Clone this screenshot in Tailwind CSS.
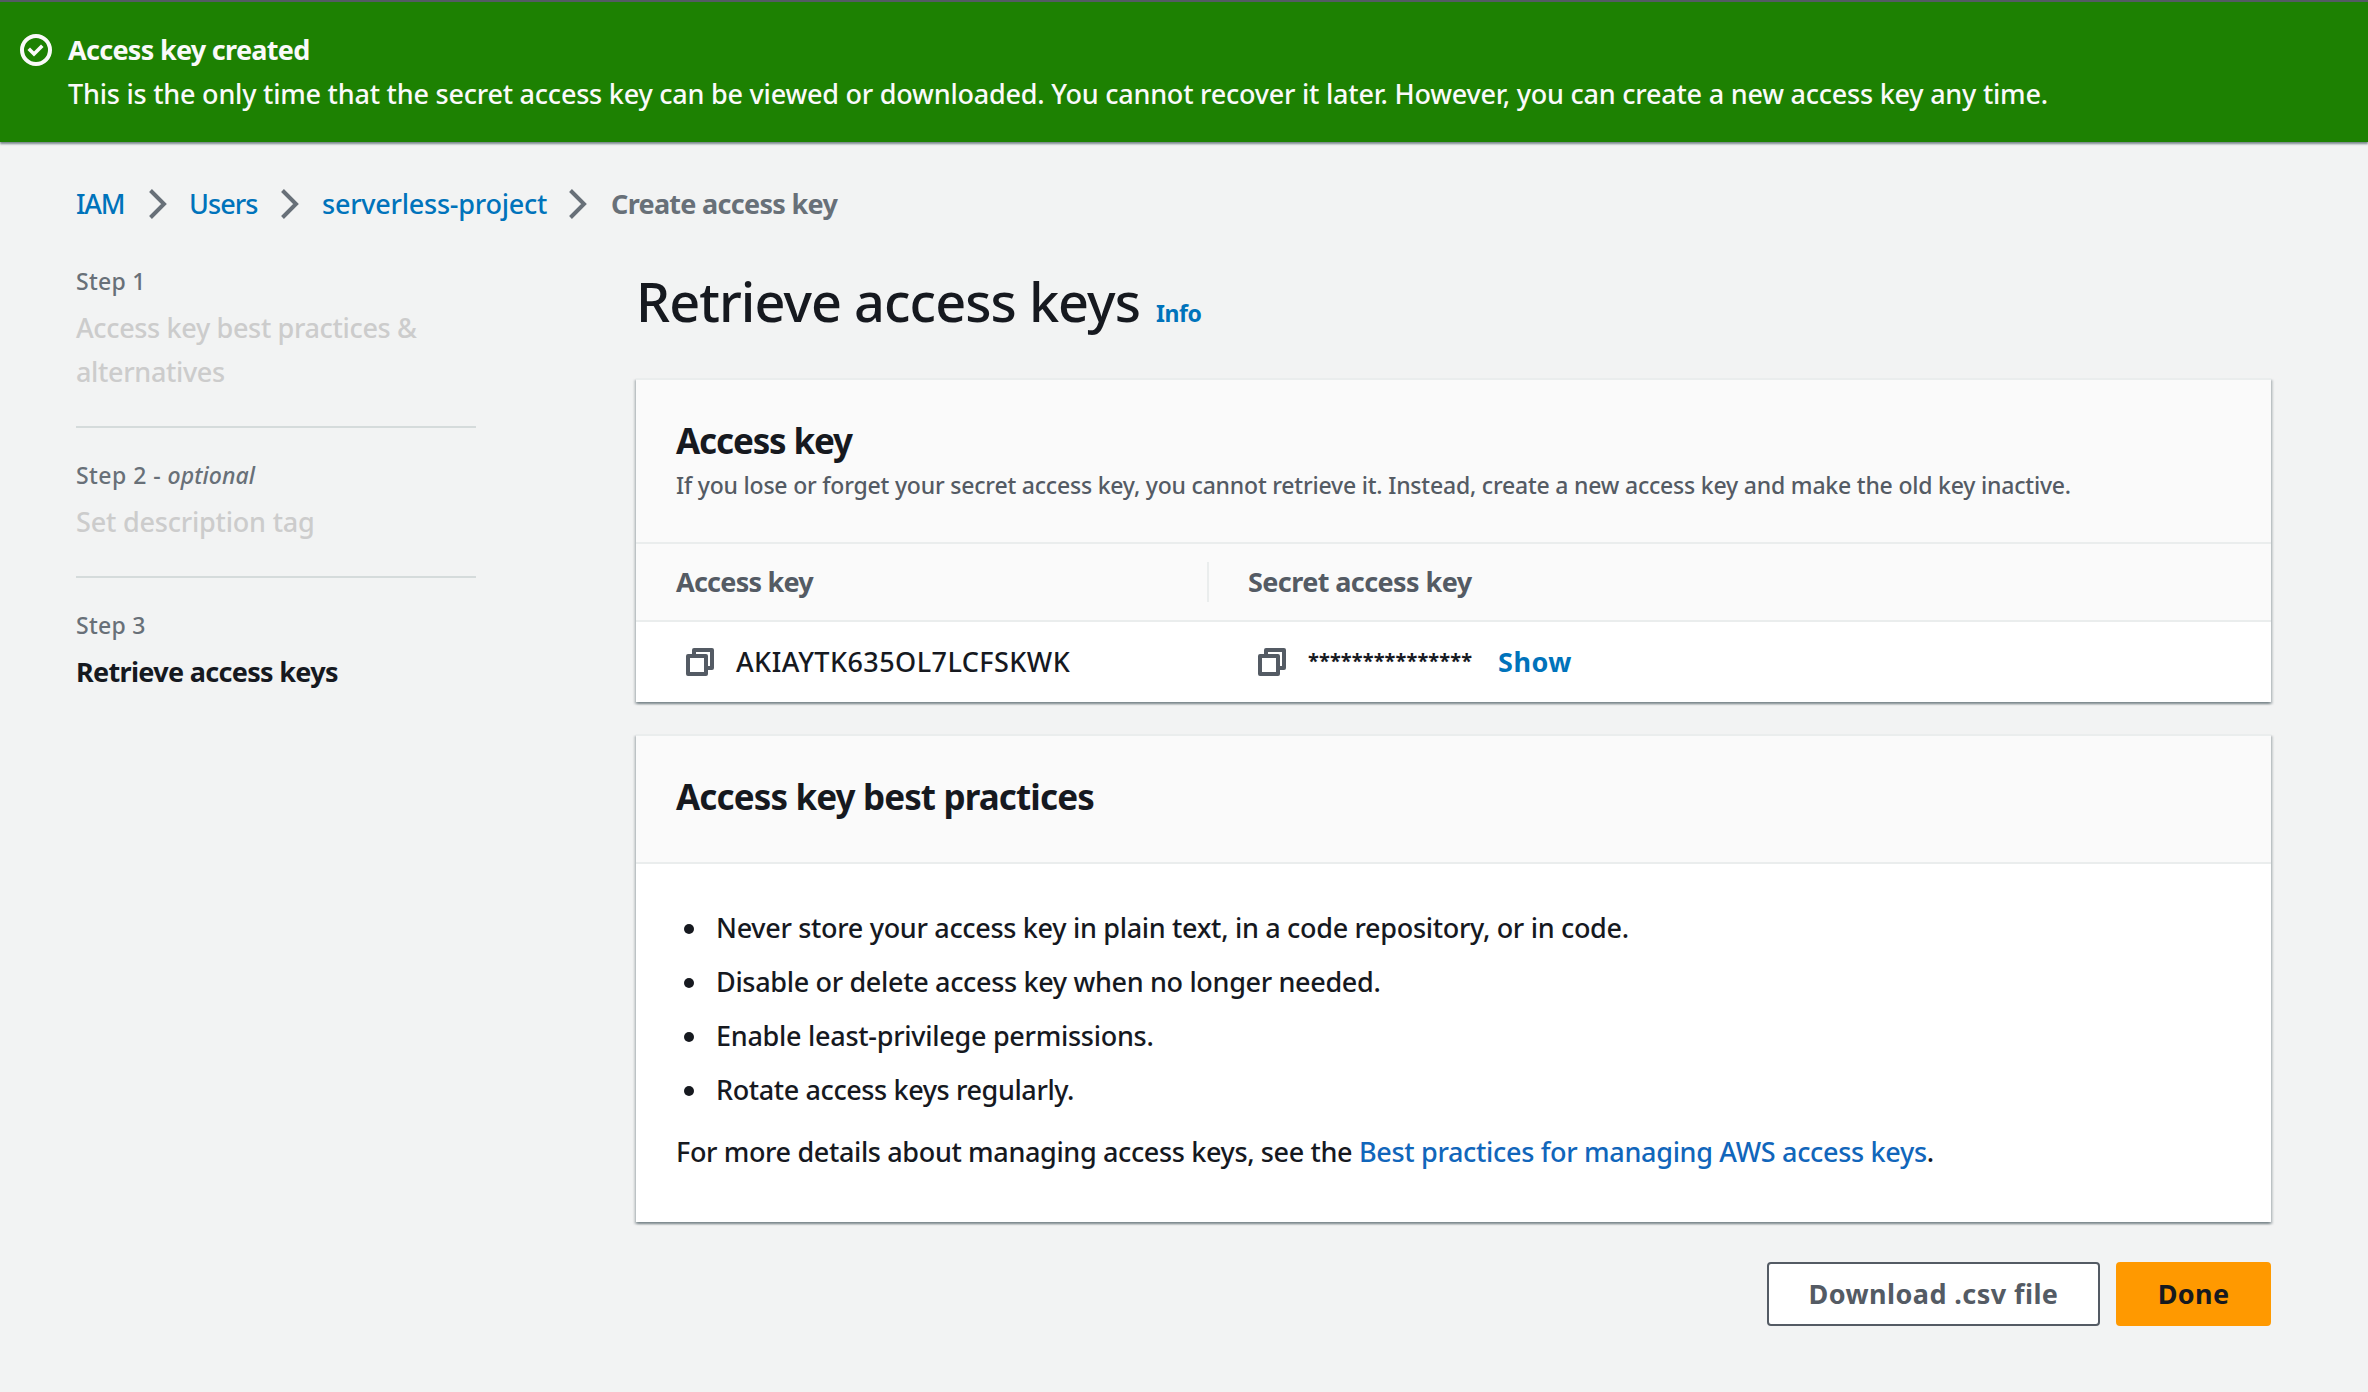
<!DOCTYPE html>
<html lang="en">
<head>
<meta charset="utf-8">
<title>Create access key | IAM</title>
<script src="https://cdn.jsdelivr.net/npm/@tailwindcss/browser@4"></script>
</head>
<body class="min-h-screen overflow-hidden bg-[#f2f3f3] font-['Noto_Sans',sans-serif] text-[27px] leading-[44px] font-medium text-[#16191f]">

<!-- Success flash -->
<div class="flex h-[142px] items-start border-t-2 border-[#545b64] bg-[#1d8102] pt-[26px] pl-5 text-[#fafafa] shadow-[0_2px_2px_0_rgba(0,28,36,0.5)]">
  <svg class="mt-[6px] size-8 shrink-0" viewBox="0 0 16 16" fill="none" stroke="currentColor" stroke-width="2"><circle cx="8" cy="8" r="7"/><path d="m5 8 2 2 3.5-3.5" stroke-linecap="square" stroke-width="1.8"/></svg>
  <div class="ml-4 whitespace-nowrap">
    <p class="font-bold tracking-[-0.7px]">Access key created</p>
    <p class="tracking-[-0.22px]">This is the only time that the secret access key can be viewed or downloaded. You cannot recover it later. However, you can create a new access key any time.</p>
  </div>
</div>

<!-- Breadcrumbs -->
<nav class="mt-10 flex items-start pl-[76px] whitespace-nowrap text-[#0073bb]">
  <a class="w-[73px] tracking-[-1.3px]">IAM</a>
  <svg class="mt-[7px] h-[30px] w-[18px] text-[#687078]" viewBox="0 0 18 30" fill="none" stroke="currentColor" stroke-width="4"><path d="M1.5 1.5 15 15 1.5 28.5"/></svg>
  <a class="ml-[22px] w-[92px] tracking-[-0.9px]">Users</a>
  <svg class="mt-[7px] h-[30px] w-[18px] text-[#687078]" viewBox="0 0 18 30" fill="none" stroke="currentColor" stroke-width="4"><path d="M1.5 1.5 15 15 1.5 28.5"/></svg>
  <a class="ml-[23px] w-[247px] tracking-[-0.24px]">serverless-project</a>
  <svg class="mt-[7px] h-[30px] w-[18px] text-[#687078]" viewBox="0 0 18 30" fill="none" stroke="currentColor" stroke-width="4"><path d="M1.5 1.5 15 15 1.5 28.5"/></svg>
  <span class="ml-[24px] font-bold tracking-[-0.7px] text-[#687078]">Create access key</span>
</nav>

<div class="flex items-start gap-40 pt-[37px] pl-[76px]">
  <!-- Wizard steps -->
  <ol class="w-[400px] shrink-0">
    <li class="border-b-2 border-[#d5dbdb] pb-8">
      <p class="text-[23px] leading-9 tracking-[0.25px] text-[#687078]">Step 1</p>
      <p class="mt-[7px] tracking-[-0.34px] text-[#cccccc]">Access key best practices &amp;<br>alternatives</p>
    </li>
    <li class="border-b-2 border-[#d5dbdb] pt-[29px] pb-8">
      <p class="text-[23px] leading-9 tracking-[0.45px] text-[#687078]">Step 2 - <i class="tracking-[0.1px]">optional</i></p>
      <p class="mt-[7px] tracking-[-0.2px] text-[#cccccc]">Set description tag</p>
    </li>
    <li class="pt-[29px]">
      <p class="text-[23px] leading-9 tracking-[0.25px] text-[#687078]">Step 3</p>
      <p class="mt-[7px] font-bold tracking-[-0.68px]">Retrieve access keys</p>
    </li>
  </ol>

  <main class="w-[1635px] shrink-0">
    <div class="flex items-baseline pt-px">
      <h1 class="w-[520px] text-[54px] leading-[74px] font-medium tracking-[-0.95px] whitespace-nowrap">Retrieve access keys</h1>
      <a class="text-[23px] leading-9 font-bold tracking-[-0.4px] text-[#0073bb]">Info</a>
    </div>

    <!-- Key table -->
    <section class="mt-10 border-t-2 border-[#eaeded] bg-white shadow-[0_2px_2px_0_rgba(0,28,36,0.3),2px_2px_2px_0_rgba(0,28,36,0.15),-2px_2px_2px_0_rgba(0,28,36,0.15)]">
      <header class="border-b-2 border-[#eaeded] bg-[#fafafa] px-10 pt-[37px] pb-[39px]">
        <h2 class="text-[35px] leading-[47px] font-bold tracking-[-1.15px]">Access key</h2>
        <p class="mt-[3px] text-[23px] leading-9 tracking-[-0.2px] whitespace-nowrap text-[#545b64]">If you lose or forget your secret access key, you cannot retrieve it. Instead, create a new access key and make the old key inactive.</p>
      </header>
      <div class="grid grid-cols-[573px_1fr] border-b-2 border-[#eaeded] bg-[#fafafa] font-bold text-[#545b64]">
        <div class="flex items-center justify-between py-4 pl-10 tracking-[-0.75px]">Access key<span class="h-10 w-[2px] bg-[#eaeded]"></span></div>
        <div class="py-4 pl-[39px] tracking-[-0.58px]">Secret access key</div>
      </div>
      <div class="grid grid-cols-[573px_1fr] py-[18px]">
        <div class="flex items-start pl-[50px]">
          <svg class="mt-2 size-7 text-[#545b64]" viewBox="0 0 28 28" fill="none" stroke="currentColor" stroke-width="4" stroke-linejoin="round"><path d="M8 6V2h18v18h-6"/><path d="M2 8h18v18H2z"/></svg>
          <span class="ml-[22px] tracking-[0.44px]">AKIAYTK635OL7LCFSKWK</span>
        </div>
        <div class="flex items-start pl-[49px]">
          <svg class="mt-2 size-7 text-[#545b64]" viewBox="0 0 28 28" fill="none" stroke="currentColor" stroke-width="4" stroke-linejoin="round"><path d="M8 6V2h18v18h-6"/><path d="M2 8h18v18H2z"/></svg>
          <span class="mt-[7px] ml-[22px] w-[190px] text-[20px] leading-[27px] font-bold tracking-[0.1px]">***************</span>
          <a class="font-bold tracking-[0.5px] text-[#0073bb]">Show</a>
        </div>
      </div>
    </section>

    <!-- Best practices -->
    <section class="mt-8 border-t-2 border-[#eaeded] bg-white shadow-[0_2px_2px_0_rgba(0,28,36,0.3),2px_2px_2px_0_rgba(0,28,36,0.15),-2px_2px_2px_0_rgba(0,28,36,0.15)]">
      <header class="border-b-2 border-[#eaeded] bg-[#fafafa] px-10 pt-[37px] pb-[42px]">
        <h2 class="text-[35px] leading-[47px] font-bold tracking-[-0.87px]">Access key best practices</h2>
      </header>
      <div class="px-10 pt-[42px] pb-12">
        <ul class="flex flex-col gap-[10px] pl-2">
          <li class="flex items-start gap-[22px]"><span class="mt-[18px] size-[10px] rounded-full bg-[#16191f]"></span><span class="tracking-[-0.31px]">Never store your access key in plain text, in a code repository, or in code.</span></li>
          <li class="flex items-start gap-[22px]"><span class="mt-[18px] size-[10px] rounded-full bg-[#16191f]"></span><span class="tracking-[-0.33px]">Disable or delete access key when no longer needed.</span></li>
          <li class="flex items-start gap-[22px]"><span class="mt-[18px] size-[10px] rounded-full bg-[#16191f]"></span><span class="tracking-[-0.28px]">Enable least-privilege permissions.</span></li>
          <li class="flex items-start gap-[22px]"><span class="mt-[18px] size-[10px] rounded-full bg-[#16191f]"></span><span class="tracking-[-0.39px]">Rotate access keys regularly.</span></li>
        </ul>
        <p class="mt-[18px] tracking-[-0.36px]">For more details about managing access keys, see the <a class="tracking-[-0.31px] text-[#1166bb]">Best practices for managing AWS access keys</a>.</p>
      </div>
    </section>

    <div class="mt-10 flex justify-end gap-4">
      <button class="flex h-16 w-[333px] items-center justify-center rounded-[4px] border-2 border-[#545b64] bg-white font-bold tracking-[0.43px] text-[#545b64]">Download .csv file</button>
      <button class="flex h-16 w-[155px] items-center justify-center rounded-[4px] bg-[#ff9900] font-bold tracking-[0.35px]">Done</button>
    </div>
  </main>
</div>
</body>
</html>
